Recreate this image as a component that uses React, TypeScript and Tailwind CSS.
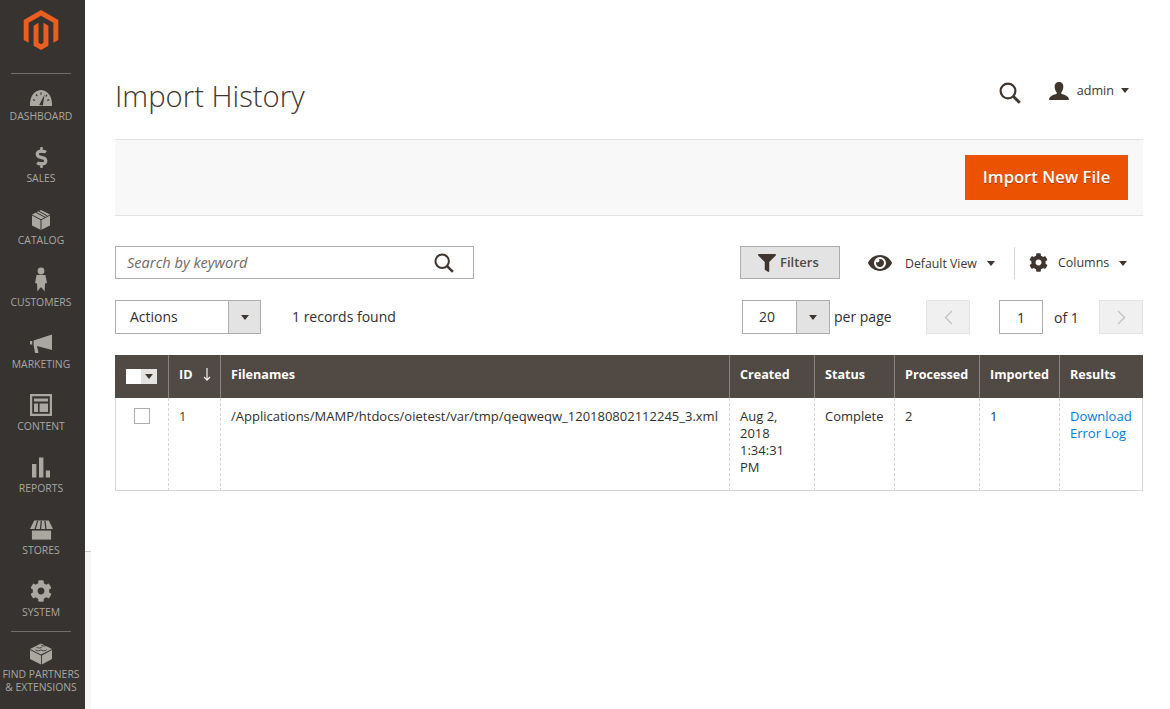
import { ReactNode } from "react";
import { SiMagento } from "react-icons/si";
import { FaCog, FaDollarSign, FaEye, FaFilter } from "react-icons/fa";

function Caret({ className = "" }: { className?: string }) {
  return <span className={`inline-block w-0 h-0 border-x-4 border-x-transparent border-t-[5px] border-t-[#41362f] ${className}`} />;
}

function SearchIcon({ size }: { size: number }) {
  return (
    <svg width={size} height={size} viewBox="0 0 22 22" fill="none" stroke="#41362f" strokeWidth="2.2">
      <circle cx="9" cy="9" r="7.4" />
      <path d="M14.4 14.4 L20.8 20.8" strokeWidth="2.8" />
    </svg>
  );
}

const iconFill = "#aaa6a0";

const menu: { label: string[]; icon: ReactNode }[] = [
  {
    label: ["DASHBOARD"],
    icon: (
      <svg width="22" height="16" viewBox="0 0 22 16">
        <path fill={iconFill} d="M0 16 C-.6 6 5 0 11 0 C17 0 22.6 6 22 16 Z" />
        <path fill="#373330" d="M9.2 15 L14.6 4.5 L12.8 15.5 Z" />
        <path stroke="#373330" strokeWidth="1.2" d="M3 9.5 L5 10.5 M6 4.5 L7.4 6 M11 2.6 L11 4.8 M17 5 L15.8 6.4 M19.2 9.6 L17.2 10.5" />
      </svg>
    ),
  },
  {
    label: ["SALES"],
    icon: <FaDollarSign size={21} color={iconFill} />,
  },
  {
    label: ["CATALOG"],
    icon: (
      <svg width="18" height="20" viewBox="0 0 18 20">
        <path fill={iconFill} d="M9 0 L18 4.6 V15.4 L9 20 L0 15.4 V4.6 Z" />
        <path stroke="#373330" strokeWidth="1" fill="none" d="M0 5 L9 9.8 L18 5 M9 9.8 V20 M4 2.4 L13 7.2 M6.4 1 L15.2 5.8" />
      </svg>
    ),
  },
  {
    label: ["CUSTOMERS"],
    icon: (
      <svg width="12" height="25" viewBox="0 0 12 24">
        <circle cx="6" cy="3.5" r="3.4" fill={iconFill} />
        <path fill={iconFill} d="M1.6 7.6 H10.4 L12 15.5 L10 16 L9.6 24 L6.6 20 H5.4 L2.4 24 L2 16 L0 15.5 Z" />
      </svg>
    ),
  },
  {
    label: ["MARKETING"],
    icon: (
      <svg width="22" height="20" viewBox="0 0 22 19">
        <path fill={iconFill} d="M22 0 V15.5 L7 11.5 L8.6 18.6 L5 18.6 L3.6 10.4 V6 Z M0 6.6 H2.2 V10 H0 Z" />
      </svg>
    ),
  },
  {
    label: ["CONTENT"],
    icon: (
      <svg width="22" height="22" viewBox="0 0 22 22">
        <path fill={iconFill} fillRule="evenodd" d="M0 0 H22 V22 H0 Z M2.2 2.2 V19.8 H19.8 V2.2 Z" />
        <path fill={iconFill} d="M4 4.5 H18 V7.6 H4 Z M4 9.4 H8 V18 H4 Z M9.6 9.4 H18 V18 H9.6 Z" />
      </svg>
    ),
  },
  {
    label: ["REPORTS"],
    icon: (
      <svg width="18" height="21" viewBox="0 0 18 20">
        <path fill={iconFill} d="M0 6.6 H4.4 V20 H0 Z M7 0 H11.4 V20 H7 Z M13.8 13 H18 V20 H13.8 Z" />
      </svg>
    ),
  },
  {
    label: ["STORES"],
    icon: (
      <svg width="23" height="20" viewBox="0 0 24 20">
        <path fill={iconFill} d="M4.4 0 H19.6 L24 9 H0 Z" />
        <path stroke="#373330" strokeWidth="1.3" d="M8 .5 L5.4 9 M11.8 .5 L11 9 M15.6 .5 L16.6 9" />
        <path fill={iconFill} d="M2 10.6 H22 V20 H2 Z" />
      </svg>
    ),
  },
  {
    label: ["SYSTEM"],
    icon: <FaCog size={22} color={iconFill} />,
  },
];

function MenuItem({ label, icon }: { label: string[]; icon: ReactNode }) {
  return (
    <div className="flex flex-col items-center">
      <div className="h-[32px] flex items-end justify-center">{icon}</div>
      <div className="mt-[4px] text-center text-[10.4px] leading-[13px] text-[#aaa6a0]">
        {label.map((l) => (
          <div key={l}>{l}</div>
        ))}
      </div>
    </div>
  );
}

function Sidebar() {
  return (
    <aside className="relative w-[85px] shrink-0 min-h-[709px] bg-[#373330] pr-[3px]">
      <div className="h-[73px] pt-[10px] flex justify-center">
        <SiMagento size={40} color="#eb5e1f" />
      </div>
      <div className="ml-[11px] w-[60px] h-px bg-[#736e69]" />
      <nav className="h-[558px] grid grid-rows-9">
        {menu.map((m) => (
          <MenuItem key={m.label[0]} label={m.label} icon={m.icon} />
        ))}
      </nav>
      <div className="-mt-px ml-[11px] w-[60px] h-px bg-[#736e69]" />
      <div className="mt-[11px] flex flex-col items-center">
        <svg width="22" height="22" viewBox="0 0 24 23">
          <path fill={iconFill} d="M0 7 L12 13 L12 23 L0 17 Z M24 7 L13 13 L13 23 L24 17 Z" />
          <path fill={iconFill} d="M12 0 L24 6 L12 12 L0 6 Z" />
          <path stroke="#373330" strokeWidth=".9" fill="none" d="M7 3.6 a3 1.4 0 0 0 6 0 M12 1.4 a3 1.4 0 0 0 6 0 M6 6.6 a3 1.4 0 0 0 6 0 M12 6.6 a3 1.4 0 0 0 6 0" />
        </svg>
        <div className="mt-[3px] text-center text-[10.4px] leading-[13px] text-[#aaa6a0] whitespace-nowrap">
          <div>FIND PARTNERS</div>
          <div>&amp; EXTENSIONS</div>
        </div>
      </div>
      {/* thin strip that peeks out beside the menu */}
      <div className="absolute left-[85px] top-[551px] w-[6px] h-[158px] bg-[#f6f6f6] border-t border-[#cccccc]" />
    </aside>
  );
}

function SelectBox({ value, width, btn, textClass }: { value: string; width: string; btn: string; textClass: string }) {
  return (
    <div className={`h-[34px] flex border border-[#adadad] bg-white ${width}`}>
      <div className={`flex-1 flex items-center pb-[2px] ${textClass}`}>{value}</div>
      <div className={`${btn} bg-[#e3e3e3] border-l border-[#adadad] flex items-center justify-center`}>
        <Caret />
      </div>
    </div>
  );
}

function PageArrow({ dir }: { dir: "left" | "right" }) {
  return (
    <div className="w-[44px] h-[34px] bg-[#f0f0f0] border border-[#e3e3e3] flex items-center justify-center">
      <svg width="9" height="15" viewBox="0 0 9 15" fill="none" stroke="#c2c2c2" strokeWidth="1.4">
        <path d={dir === "left" ? "M8 1 L1.5 7.5 L8 14" : "M1 1 L7.5 7.5 L1 14"} />
      </svg>
    </div>
  );
}

const headCell = "h-[43px] px-[10px] pb-[3px] text-left align-middle text-[12.6px] font-bold text-white border-l border-[#8a837f] first:border-l-[#514943] last:border-r last:border-r-[#514943] whitespace-nowrap";
const bodyCell = "pt-[10px] pb-[14px] px-[10px] align-top border-b border-b-[#d6d6d6] border-l border-dashed border-l-[#d6d6d6] first:[border-left-style:solid] last:border-r last:[border-right-style:solid] last:border-r-[#d6d6d6] [border-bottom-style:solid] leading-[17px]";

function ImportTable() {
  return (
    <table className="mt-[21px] w-[1028px] table-fixed border-separate border-spacing-0 text-[13px] text-[#303030]">
      <colgroup>
        <col className="w-[53px]" />
        <col className="w-[52px]" />
        <col className="w-[509px]" />
        <col className="w-[85px]" />
        <col className="w-[80px]" />
        <col className="w-[85px]" />
        <col className="w-[80px]" />
        <col className="w-[84px]" />
      </colgroup>
      <thead>
        <tr className="bg-[#514943]">
          <th className={headCell}>
            <div className="flex w-[31px] h-[15px] mt-[3px]">
              <span className="w-[15px] bg-white" />
              <span className="w-[16px] bg-[#e3e3e3] flex items-center justify-center">
                <Caret />
              </span>
            </div>
          </th>
          <th className={headCell}>
            <div className="flex items-center justify-between">
              <span>ID</span>
              <span className="w-[8px] mr-[-1px]">
                <svg width="8" height="13" viewBox="0 0 8 13" fill="none" stroke="#fff" strokeWidth="1.1">
                  <path d="M4 0 V12 M1 9 L4 12.2 L7 9" />
                </svg>
              </span>
            </div>
          </th>
          <th className={headCell}>Filenames</th>
          <th className={headCell}>Created</th>
          <th className={headCell}>Status</th>
          <th className={headCell}>Processed</th>
          <th className={headCell}>Imported</th>
          <th className={headCell}>Results</th>
        </tr>
      </thead>
      <tbody>
        <tr>
          <td className={bodyCell}>
            <div className="w-[16px] h-[16px] ml-[8px] border border-[#adadad] bg-white" />
          </td>
          <td className={`${bodyCell} text-[#6e2a1e]`}>1</td>
          <td className={`${bodyCell} whitespace-nowrap`}>/Applications/MAMP/htdocs/oietest/var/tmp/qeqweqw_120180802112245_3.xml</td>
          <td className={bodyCell}>Aug 2, 2018 1:34:31 PM</td>
          <td className={bodyCell}>Complete</td>
          <td className={bodyCell}>2</td>
          <td className={`${bodyCell} text-[#24324a]`}>1</td>
          <td className={`${bodyCell} text-[#007bdb]`}>Download Error Log</td>
        </tr>
      </tbody>
    </table>
  );
}

export default function App() {
  return (
    <div className="flex min-h-[709px] bg-white font-['Open_Sans',sans-serif] text-[#303030]">
      <Sidebar />
      <main className="w-[1085px] pl-[30px] pr-[27px]">
        <header className="h-[139px] flex justify-between">
          <h1 className="mt-[74px] text-[29.25px] leading-[44px] font-light text-[#41362f]">Import History</h1>
          <div className="mt-[81px] flex items-start pr-[14px]">
            <div className="mt-px">
              <SearchIcon size={22} />
            </div>
            <svg className="ml-[28px] mt-[1px]" width="20" height="18" viewBox="0 0 21 19">
              <path fill="#41362f" d="M10.5 0 C14 0 15.4 2.6 15 6 C14.7 8.4 13.8 10 12.8 11 L13 12.4 C16 13.6 21 14.4 21 19 H0 C0 14.4 5 13.6 8 12.4 L8.2 11 C7.2 10 6.3 8.4 6 6 C5.6 2.6 7 0 10.5 0 Z" />
            </svg>
            <span className="ml-[8px] text-[12.6px] leading-[20px] text-[#41362f]">admin</span>
            <Caret className="ml-[7px] mt-[7px]" />
          </div>
        </header>

        <section className="h-[77px] flex items-center justify-end bg-[#f8f8f8] border-y border-[#e3e3e3] pr-[15px]">
          <button className="w-[163px] h-[45px] bg-[#eb5202] text-white text-[16.6px] font-semibold [text-shadow:0_1px_0_#a83a00]">Import New File</button>
        </section>

        <div className="mt-[30px] h-[33px] flex items-center">
          <div className="w-[359px] h-[33px] flex items-center justify-between border border-[#adadad] pl-[11px] pr-[19px]">
            <span className="italic text-[14.6px] text-[#6f6a66]">Search by keyword</span>
            <SearchIcon size={20} />
          </div>
          <button className="ml-[266px] w-[100px] h-[33px] flex items-center pl-[17px] gap-[4px] bg-[#e3e3e3] border border-[#adadad] text-[13px] font-semibold text-[#514943]">
            <FaFilter size={18} color="#41362f" />
            Filters
          </button>
          <FaEye className="ml-[28px]" size={24} color="#41362f" />
          <span className="ml-[13px] mt-[3px] text-[12.3px] text-[#41362f]">Default View</span>
          <Caret className="ml-[10px] mt-[2px]" />
          <span className="ml-[19px] w-px h-[32px] bg-[#d6d6d6]" />
          <FaCog className="ml-[14px]" size={19} color="#41362f" />
          <span className="ml-[10px] mt-[2px] text-[12.5px] text-[#41362f]">Columns</span>
          <Caret className="ml-[10px] mt-[2px]" />
        </div>

        <div className="mt-[21px] h-[34px] flex items-center text-[14px]">
          <SelectBox value="Actions" width="w-[146px]" btn="w-[32px]" textClass="pl-[14px]" />
          <span className="ml-[31px] pb-[2px]">1 records found</span>
          <div className="ml-auto">
            <SelectBox value="20" width="w-[88px]" btn="w-[33px]" textClass="pl-[16px]" />
          </div>
          <span className="ml-[4px] w-[57px] pb-[1px] whitespace-nowrap">per page</span>
          <div className="ml-[35px]">
            <PageArrow dir="left" />
          </div>
          <div className="ml-[29px] w-[44px] h-[34px] border border-[#adadad] flex items-center justify-center">1</div>
          <span className="ml-[11px] w-[45px]">of 1</span>
          <PageArrow dir="right" />
        </div>

        <ImportTable />
      </main>
    </div>
  );
}
